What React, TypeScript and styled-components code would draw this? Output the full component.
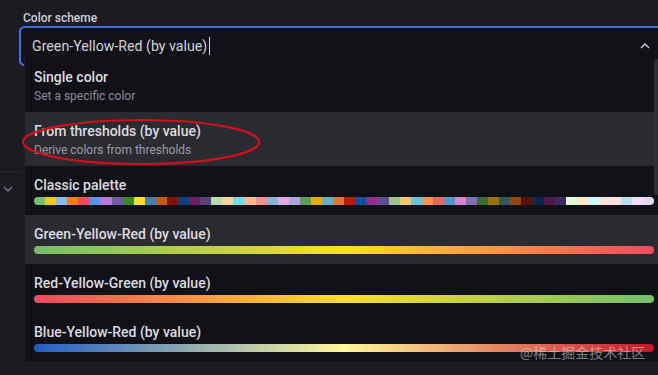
import React from 'react';
import styled, { createGlobalStyle } from 'styled-components';

const GlobalStyle = createGlobalStyle`
    html, body {
        margin: 0;
        padding: 0;
        background: #1b1c21;
        overflow: hidden;
    }
    body {
        font-family: Roboto, 'Liberation Sans', sans-serif;
        color: #ccccdc;
    }
`;

const CLASSIC = [
    '#73BF69', '#F2CC0C', '#8AB8FF', '#FF780A', '#F2495C', '#5794F2', '#B877D9', '#705DA0',
    '#37872D', '#FADE2A', '#447EBC', '#C15C17', '#890F02', '#0A437C', '#6D1F62', '#584477',
    '#B7DBAB', '#F4D598', '#70DBED', '#F9BA8F', '#F29191', '#82B5D8', '#E5A8E2', '#AEA2E0',
    '#629E51', '#E5AC0E', '#64B0C8', '#E0752D', '#BF1B00', '#0A50A1', '#962D82', '#614D93',
    '#9AC48A', '#F2C96D', '#65C5DB', '#F9934E', '#EA6460', '#5195CE', '#D683CE', '#806EB7',
    '#3F6833', '#967302', '#2F575E', '#99440A', '#58140C', '#052B51', '#511749', '#3F2B5B',
    '#E0F9D7', '#FCEACA', '#CFFAFF', '#F9E2D2', '#FCE2DE', '#BADFF4', '#F9D9F9', '#DEDAF7'
];

interface Option {
    label: string;
    description?: string;
    gradient?: string;
    classic?: boolean;
    active?: boolean;
}

const OPTIONS: Option[] = [
    { label: 'Single color', description: 'Set a specific color' },
    { label: 'From thresholds (by value)', description: 'Derive colors from thresholds', active: true },
    { label: 'Classic palette', classic: true },
    { label: 'Green-Yellow-Red (by value)', gradient: 'linear-gradient(to right, #73BF69, #FADE2A, #F2495C)', active: true },
    { label: 'Red-Yellow-Green (by value)', gradient: 'linear-gradient(to right, #F2495C, #FADE2A, #73BF69)' },
    { label: 'Blue-Yellow-Red (by value)', gradient: 'linear-gradient(to right, #1F60C4, #FFF899, #C4162A)' }
];

const App = () => {
    return (
        <>
            <GlobalStyle />
            <Page>
                <Gutter>
                    <GutterDivider />
                    <GutterChevron width="10" height="6" viewBox="0 0 10 6">
                        <polyline points="1,1 5,5 9,1" fill="none" stroke="#7d7e88" strokeWidth="1.3" />
                    </GutterChevron>
                </Gutter>
                <Field>
                    <Label>Color scheme</Label>
                    <Input>
                        <InputText>Green-Yellow-Red (by value)</InputText>
                        <Caret />
                        <Spacer />
                        <svg width="10" height="6" viewBox="0 0 10 6">
                            <polyline points="1,5 5,1 9,5" fill="none" stroke="#c4c5d0" strokeWidth="1.5" />
                        </svg>
                    </Input>
                    <Menu>
                        {OPTIONS.map((o) => (
                            <Row key={o.label} $active={!!o.active} $bar={!o.description}>
                                <Title>{o.label}</Title>
                                {o.description && <Description $active={!!o.active}>{o.description}</Description>}
                                {o.gradient && <Bar style={{ background: o.gradient }} />}
                                {o.classic && (
                                    <Bar>
                                        {CLASSIC.map((c, i) => (
                                            <Swatch key={i} style={{ background: c }} />
                                        ))}
                                    </Bar>
                                )}
                            </Row>
                        ))}
                        <ScrollThumb />
                    </Menu>
                </Field>
                <Annotation width="240" height="50" viewBox="0 0 240 50">
                    <ellipse cx="120" cy="24" rx="118" ry="22" fill="none" stroke="#d0101c" strokeWidth="2.2" />
                </Annotation>
                <Watermark>@稀土掘金技术社区</Watermark>
            </Page>
        </>
    );
};

export default App;

const Page = styled.div`
    position: relative;
    width: 658px;
    height: 375px;
    overflow: hidden;
    display: flex;
`;

const Gutter = styled.div`
    width: 23px;
    flex: none;
    display: flex;
    flex-direction: column;
    padding-top: 171px;
`;

const GutterDivider = styled.div`
    height: 1px;
    background: #27282d;
`;

const GutterChevron = styled.svg`
    margin: 14px 0 0 3px;
`;

const Field = styled.div`
    flex: none;
    width: 640px;
    padding-top: 10px;
    display: flex;
    flex-direction: column;
`;

const Label = styled.div`
    font-size: 12px;
    font-weight: 500;
    line-height: 16px;
    color: #ccccdc;
    margin-bottom: 4px;
`;

const Input = styled.div`
    height: 32px;
    box-sizing: border-box;
    display: flex;
    align-items: center;
    padding: 0 13px 0 9px;
    background: #111217;
    border-radius: 2px;
    box-shadow: 0 0 0 2px #111217, 0 0 0 4px #3d71d9;
`;

const InputText = styled.span`
    font-size: 14.2px;
    color: #d0d1dc;
    white-space: nowrap;
`;

const Caret = styled.span`
    width: 1px;
    height: 18px;
    margin-left: 2px;
    background: #d8d9e0;
`;

const Spacer = styled.div`
    flex: 1;
`;

const Menu = styled.div`
    position: relative;
    z-index: 1;
    margin: -4px 0 0 1px;
    width: 636px;
    height: 304px;
    overflow: hidden;
    background: #111217;
    border-left: 1px solid #1e1f24;
    border-bottom: 1px solid #1e1f24;
`;

const Row = styled.div<{ $active: boolean; $bar: boolean }>`
    display: flex;
    flex-direction: column;
    padding: 8px 7px ${({ $bar }) => ($bar ? '10px' : '8px')} 9px;
    background: ${({ $active }) => ($active ? '#2a2b30' : 'transparent')};
`;

const Title = styled.div`
    font-size: 14px;
    font-weight: 500;
    line-height: 22px;
    color: #dadbe1;
    white-space: nowrap;
`;

const Description = styled.div<{ $active: boolean }>`
    font-size: 12px;
    line-height: 16px;
    color: ${({ $active }) => ($active ? '#9a9ba5' : '#8c8d97')};
    white-space: nowrap;
`;

const Bar = styled.span`
    display: flex;
    height: 8px;
    margin-top: 1px;
    border-radius: 4px;
    overflow: hidden;
`;

const Swatch = styled.span`
    flex: 1;
`;

const ScrollThumb = styled.div`
    position: absolute;
    top: 1px;
    right: 2px;
    width: 5px;
    height: 136px;
    border-radius: 3px;
    background: #2e2f35;
`;

const Annotation = styled.svg`
    position: absolute;
    z-index: 2;
    left: 21px;
    top: 118px;
    pointer-events: none;
`;

const Watermark = styled.div`
    position: absolute;
    z-index: 2;
    left: 520px;
    top: 343px;
    font-family: 'Noto Sans CJK SC', sans-serif;
    font-size: 14px;
    line-height: 18px;
    color: rgba(230, 230, 235, 0.5);
    pointer-events: none;
`;
